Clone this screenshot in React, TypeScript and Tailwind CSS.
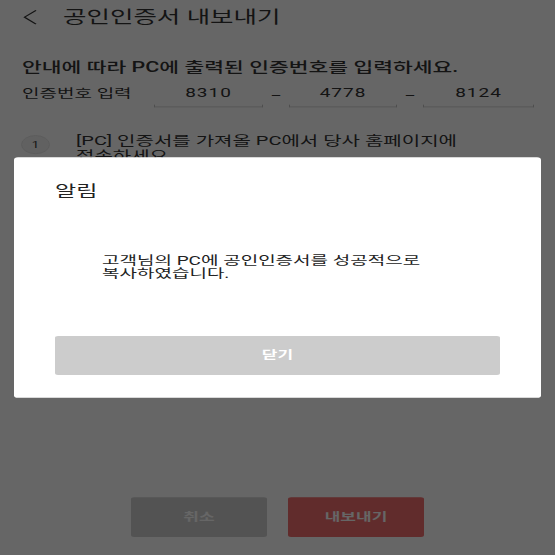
import React from "react";

const CODE = ["8310", "4778", "8124"];

function CodeBox({ value, w }: { value: string; w: string }) {
  return (
    <div className={`flex h-[40px] flex-col ${w}`}>
      <div className="flex flex-1 items-center justify-center text-[19px] tracking-[1px] text-[#333]">{value}</div>
      <div className="h-[4px] border-x border-b border-[#c4c4c4]" />
    </div>
  );
}

function Dash() {
  return <div className="flex w-[26px] justify-center pt-[6px] text-[17px] text-[#333]">–</div>;
}

export default function App() {
  return (
    <div className="relative h-[555px] w-[555px] overflow-hidden bg-white font-['Roboto','Noto_Sans_CJK_KR',sans-serif]">
      <div className="relative flex h-[854px] w-[555px] origin-top-left scale-y-[0.65] flex-col">
        {/* header */}
        <div className="flex h-[52px] items-center pl-[23px]">
          <svg width="14" height="23" viewBox="0 0 14 23" fill="none">
            <polyline points="13,1 1.5,11.5 13,22" stroke="#333" strokeWidth="1.6" />
          </svg>
          <span className="ml-[26px] text-[25.5px] text-[#333]">공인인증서 내보내기</span>
        </div>

        <p className="mt-[37px] pl-[22px] text-[21.5px] font-medium leading-[28px] text-[#333]">
          안내에 따라 PC에 출력된 인증번호를 입력하세요.
        </p>

        {/* code input row */}
        <div className="mt-[8px] flex h-[40px] items-center pl-[22px]">
          <span className="w-[132px] text-[19px] text-[#333]">인증번호 입력</span>
          <CodeBox value={CODE[0]} w="w-[109px]" />
          <Dash />
          <CodeBox value={CODE[1]} w="w-[108px]" />
          <Dash />
          <CodeBox value={CODE[2]} w="w-[111px]" />
        </div>

        {/* step */}
        <div className="mt-[40px] flex pl-[21px]">
          <div className="mt-[3px] flex h-[29px] w-[29px] shrink-0 items-center justify-center rounded-full border border-[#e2e2e2] bg-[#f2f2f2] text-[13px] text-[#333]">
            1
          </div>
          <p className="ml-[26px] text-[20px] leading-[23px] text-[#333]">
            [PC] 인증서를 가져올 PC에서 당사 홈페이지에
            <br />
            접속하세요.
          </p>
        </div>

        {/* bottom actions */}
        <div className="mt-auto flex justify-center gap-[21px] pb-[28px]">
          <button className="h-[61px] w-[136px] rounded-[3px] bg-[#d0d0d0] text-[17px] font-bold text-white">취소</button>
          <button className="h-[61px] w-[136px] rounded-[3px] bg-[#f36e6e] text-[17px] font-bold text-white">내보내기</button>
        </div>

        {/* dialog */}
        <div className="absolute inset-0 flex items-center bg-[rgba(0,0,0,0.6)]">
          <div className="mx-[14px] flex flex-1 flex-col rounded-[4px] bg-white px-[41px] pb-[35px] pt-[37px]">
            <h2 className="text-[23px] leading-[32px] text-[#222]">알림</h2>
            <p className="mt-[79px] pl-[47px] text-[19px] leading-[21px] text-[#222]">
              고객님의 PC에 공인인증서를 성공적으로
              <br />
              복사하였습니다.
            </p>
            <button className="mt-[85px] h-[60px] rounded-[3px] bg-[#cccccc] text-[17px] font-bold text-white">닫기</button>
          </div>
        </div>
      </div>
    </div>
  );
}
